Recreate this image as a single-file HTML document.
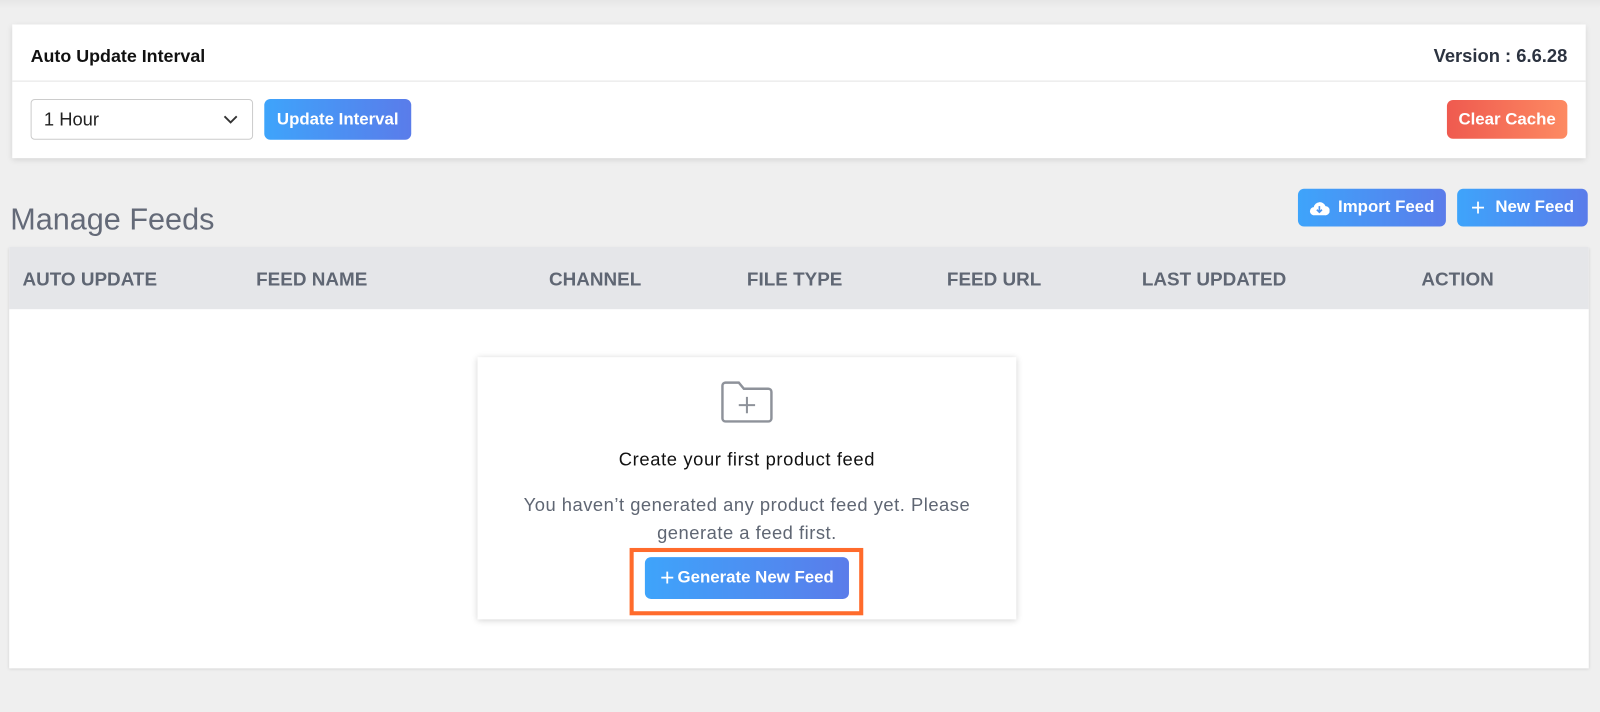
<!DOCTYPE html>
<html><head><style>
*{box-sizing:border-box;margin:0;padding:0}
html,body{width:1600px;height:712px;overflow:hidden;background:#efefef}
#w{width:1568px;height:698px;position:relative;transform:scale(1.0204);transform-origin:0 0;font-family:"Liberation Sans",sans-serif}
.abs{position:absolute}
.card{left:12px;top:24px;width:1542px;height:131px;background:#fff;box-shadow:0 2px 6px rgba(0,0,0,.12)}
.btn{position:absolute;color:#fff;font-weight:bold;font-size:16.5px;border-radius:6px;display:flex;align-items:center;justify-content:center;background:linear-gradient(90deg,#3ea4fb,#5a7cea)}
.th{position:absolute;top:263px;font-size:18.5px;font-weight:bold;color:#5f6673}
</style></head><body><div id="w">
<div class="abs" style="left:0;top:0;width:1568px;height:8px;background:linear-gradient(#e6e6e6,#efefef)"></div>
<div class="abs card">
  <div class="abs" style="left:18px;top:21px;font-size:17.5px;font-weight:bold;color:#111">Auto Update Interval</div>
  <div class="abs" style="right:18px;top:21px;font-size:18px;font-weight:bold;color:#2c3340">Version : 6.6.28</div>
  <div class="abs" style="left:0;top:55px;width:100%;height:1px;background:#e4e4e4"></div>
  <div class="abs" style="left:18px;top:73px;width:218px;height:40px;border:1px solid #ccc;border-radius:4px;font-size:18px;color:#222;padding:9px 12px">1 Hour
    <svg class="abs" style="right:14px;top:15px" width="14" height="9" viewBox="0 0 14 9"><path d="M1 1l6 6 6-6" stroke="#333" stroke-width="1.8" fill="none"/></svg></div>
  <div class="btn" style="left:247px;top:73px;width:144px;height:40px">Update Interval</div>
  <div class="btn" style="left:1406px;top:74px;width:118px;height:38px;background:linear-gradient(90deg,#ef5a4f,#fd8a62)">Clear Cache</div>
</div>
<div class="abs" style="left:10px;top:199px;font-size:30px;color:#646a78">Manage Feeds</div>
<div class="btn" style="left:1272px;top:185px;width:145px;height:37px">
  <svg width="20" height="16" viewBox="0 0 20 16" style="margin-right:8px"><path d="M5 15a4 4 0 0 1-.5-8A6 6 0 0 1 16 6a4.5 4.5 0 0 1-.5 9z" fill="#fff"/><path d="M10 6v6M7.5 9.5L10 12l2.5-2.5" stroke="#4a94f0" stroke-width="1.6" fill="none"/></svg>Import Feed</div>
<div class="btn" style="left:1428px;top:185px;width:128px;height:37px"><span style="font-weight:normal;font-size:24px;margin-right:10px;line-height:1">+</span>New Feed</div>
<div class="abs" style="left:9px;top:242px;width:1548px;height:413px;background:#fff;box-shadow:0 1px 3px rgba(0,0,0,.12)"></div>
<div class="abs" style="left:9px;top:242px;width:1548px;height:61px;background:#e5e6e9"></div>
<div class="th" style="left:22px">AUTO UPDATE</div>
<div class="th" style="left:251px">FEED NAME</div>
<div class="th" style="left:538px">CHANNEL</div>
<div class="th" style="left:732px">FILE TYPE</div>
<div class="th" style="left:928px">FEED URL</div>
<div class="th" style="left:1119px">LAST UPDATED</div>
<div class="th" style="left:1393px">ACTION</div>
<div class="abs" style="left:468px;top:350px;width:528px;height:257px;background:#fff;box-shadow:0 1px 6px rgba(0,0,0,.18)">
  <svg class="abs" style="left:237px;top:22px" width="54" height="44" viewBox="0 0 54 44"><path d="M3 6a3 3 0 0 1 3-3h13l5 6h24a3 3 0 0 1 3 3v26a3 3 0 0 1-3 3H6a3 3 0 0 1-3-3z" stroke="#8e929a" stroke-width="2.4" fill="none"/><path d="M27 17v16M19 25h16" stroke="#8e929a" stroke-width="2" /></svg>
  <div class="abs" style="left:0;width:100%;top:90px;text-align:center;font-size:18px;letter-spacing:0.6px;color:#111">Create your first product feed</div>
  <div class="abs" style="left:0;width:100%;top:132px;text-align:center;font-size:18px;letter-spacing:0.5px;line-height:27px;color:#5f6673">You haven’t generated any product feed yet. Please<br>generate a feed first.</div>
</div>
<div class="abs" style="left:617px;top:537px;width:229px;height:66px;border:4px solid #ff6b2c"></div>
<div class="btn" style="left:632px;top:546px;width:200px;height:41px"><span style="font-weight:normal;font-size:24px;margin-right:3px;line-height:1">+</span>Generate New Feed</div>
</div></body></html>
